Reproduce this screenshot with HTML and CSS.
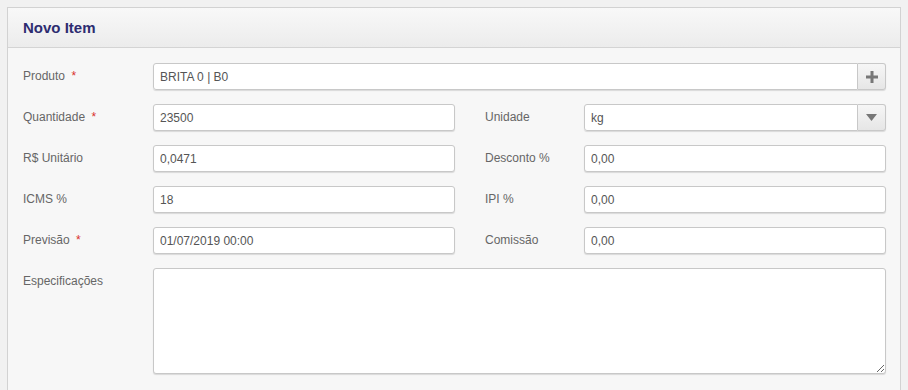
FILE: index.html
```html
<!doctype html>
<html>
<head>
<meta charset="utf-8">
<title>Novo Item</title>
<link rel="stylesheet" href="styles.css">
</head>
<body>
<section class="panel">
	<header class="panel-head">Novo Item</header>
	<div class="panel-body">
		<label class="lbl">Produto <span class="req">*</span></label>
		<div class="field wide group">
			<input class="inp" type="text" value="BRITA 0 | B0">
			<a href="javascript:;" class="addon">
				<svg width="12" height="12" viewBox="0 0 12 12"><path d="M4.5 0h3v4.5H12v3H7.5V12h-3V7.5H0v-3h4.5z" fill="#777"/></svg>
			</a>
		</div>

		<label class="lbl">Quantidade <span class="req">*</span></label>
		<div class="field"><input class="inp" type="text" value="23500"></div>
		<label class="lbl right">Unidade</label>
		<div class="field group">
			<input class="inp" type="text" value="kg">
			<a href="javascript:;" class="addon">
				<svg width="11" height="7" viewBox="0 0 11 7"><path d="M0 0h11L5.5 7z" fill="#777"/></svg>
			</a>
		</div>

		<label class="lbl">R$ Unitário</label>
		<div class="field"><input class="inp" type="text" value="0,0471"></div>
		<label class="lbl right">Desconto %</label>
		<div class="field"><input class="inp" type="text" value="0,00"></div>

		<label class="lbl">ICMS %</label>
		<div class="field"><input class="inp" type="text" value="18"></div>
		<label class="lbl right">IPI %</label>
		<div class="field"><input class="inp" type="text" value="0,00"></div>

		<label class="lbl">Previsão <span class="req">*</span></label>
		<div class="field"><input class="inp" type="text" value="01/07/2019 00:00"></div>
		<label class="lbl right">Comissão</label>
		<div class="field"><input class="inp" type="text" value="0,00"></div>

		<label class="lbl">Especificações</label>
		<div class="field wide"><textarea class="inp area"></textarea></div>
	</div>
</section>
</body>
</html>
```

FILE: styles.css
```css
body {
	margin: 0;
	padding: 7px 7px 0;
	background: #f1f1f1;
	font: 12px "Liberation Sans", Arial, sans-serif;
	color: #666;
}
.panel {
	border: 1px solid #d2d2d2;
	border-bottom: 0;
	background: #f7f7f7;
}
.panel-head {
	height: 39px;
	line-height: 39px;
	padding: 0 15px;
	border-bottom: 1px solid #d4d4d4;
	background: linear-gradient(#f8f8f8, #ececec);
	font-size: 15px;
	font-weight: bold;
	color: #2d2c70;
}
.panel-body {
	display: grid;
	grid-template-columns: 130px 1fr 129px 1fr;
	row-gap: 14px;
	padding: 15px 14px 40px 15px;
}
.lbl {
	line-height: 26px;
	white-space: nowrap;
}
.lbl.right {
	padding-left: 30px;
}
.req {
	color: #d9302c;
	margin-left: 3px;
}
.field {
	display: flex;
}
.field.wide {
	grid-column: 2 / 5;
}
.inp {
	flex: 1;
	min-width: 0;
	height: 27px;
	box-sizing: border-box;
	margin: 0;
	padding: 0 6px;
	border: 1px solid #c8c8c8;
	border-radius: 3px;
	background: #fff;
	box-shadow: 0 1px 1px rgba(0, 0, 0, 0.12);
	font: 12px "Liberation Sans", Arial, sans-serif;
	color: #555;
	outline: none;
}
.group {
	border-radius: 3px;
	box-shadow: 0 1px 1px rgba(0, 0, 0, 0.12);
}
.group .inp {
	box-shadow: none;
	border-radius: 3px 0 0 3px;
}
.addon {
	width: 28px;
	height: 27px;
	box-sizing: border-box;
	display: flex;
	align-items: center;
	justify-content: center;
	border: 1px solid #c8c8c8;
	border-left: 0;
	border-radius: 0 3px 3px 0;
	background: linear-gradient(#f6f6f6, #e6e6e6);
}
.area {
	height: 106px;
	padding: 6px;
	resize: vertical;
}
```
